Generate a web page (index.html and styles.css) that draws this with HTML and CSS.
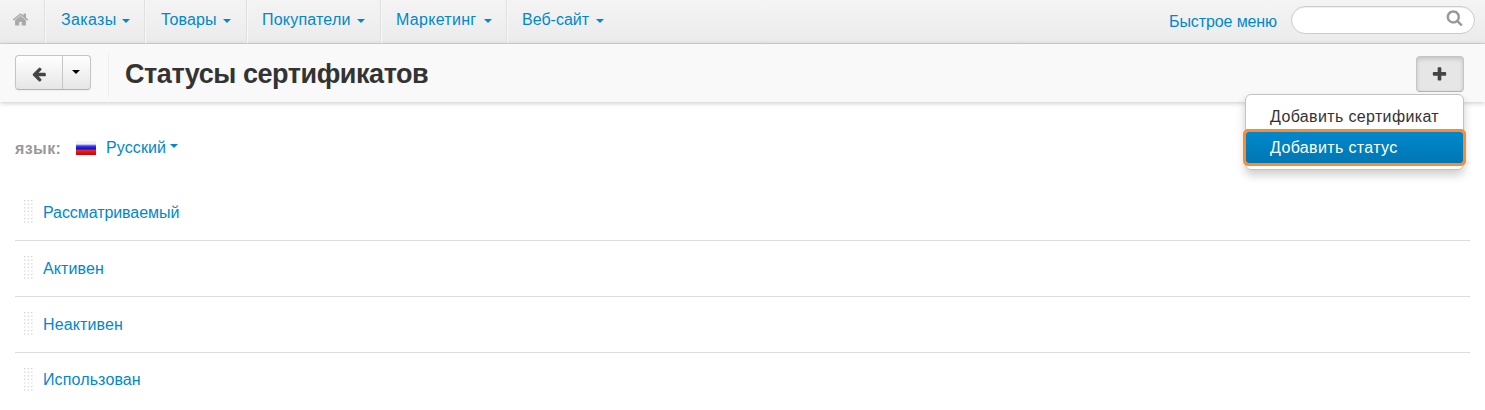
FILE: index.html
```html
<!DOCTYPE html>
<html lang="ru">
<head>
<meta charset="utf-8">
<title>Статусы сертификатов</title>
<link rel="stylesheet" href="styles.css">
</head>
<body>
<nav class="navbar">
  <a class="home"><svg class="icon" viewBox="0 0 1792 1792"><path d="M1472 992v480q0 26-19 45t-45 19h-384v-384h-256v384h-384q-26 0-45-19t-19-45v-480q0-1 .5-3t.5-3l575-474 575 474q1 2 1 6zm223-69l-62 74q-8 9-21 11h-3q-13 0-21-7l-692-577-692 577q-12 8-24 7-13-2-21-11l-62-74q-8-10-7-23.5t11-21.5l719-599q32-26 76-26t76 26l244 204v-195q0-14 9-23t23-9h192q14 0 23 9t9 23v408l219 182q10 8 11 21.5t-7 23.5z"/></svg></a>
  <a class="nav-item orders"><span class="label">Заказы</span><i class="caret"></i></a>
  <a class="nav-item products"><span class="label">Товары</span><i class="caret"></i></a>
  <a class="nav-item customers"><span class="label">Покупатели</span><i class="caret"></i></a>
  <a class="nav-item marketing"><span class="label">Маркетинг</span><i class="caret"></i></a>
  <a class="nav-item website"><span class="label">Веб-сайт</span><i class="caret"></i></a>
  <a class="quick"><span class="quick-label">Быстрое меню</span></a>
  <div class="search"><svg class="icon-search" viewBox="0 0 1792 1792"><path d="M1216 832q0-185-131.500-316.500t-316.500-131.500-316.500 131.500-131.500 316.500 131.500 316.500 316.500 131.500 316.500-131.500 131.500-316.500zm512 832q0 52-38 90t-90 38q-54 0-90-38l-343-342q-179 124-399 124-143 0-273.500-55.500t-225-150-150-225-55.500-273.500 55.500-273.500 150-225 225-150 273.500-55.500 273.500 55.500 225 150 150 225 55.500 273.500q0 220-124 399l343 343q37 37 37 90z"/></svg></div>
</nav>
<header class="actions">
  <div class="btn-group">
    <a class="btn-back"><svg class="icon" viewBox="0 0 1792 1792"><path d="M1664 896v128q0 53-32.500 90.500t-84.500 37.500h-704l293 294q38 36 38 90t-38 90l-75 76q-37 37-90 37-52 0-91-37l-651-652q-37-37-37-90 0-52 37-91l651-650q38-38 91-38 52 0 90 38l75 74q38 38 38 91t-38 91l-293 293h704q52 0 84.500 37.500t32.500 90.500z"/></svg></a>
    <a class="btn-drop"><i class="caret"></i></a>
  </div>
  <h1 class="title"><span class="title-text">Статусы сертификатов</span></h1>
  <div class="add">
    <a class="btn-add"><svg class="icon" viewBox="0 0 1792 1792"><path d="M1600 736v192q0 40-28 68t-68 28h-416v416q0 40-28 68t-68 28h-192q-40 0-68-28t-28-68v-416h-416q-40 0-68-28t-28-68v-192q0-40 28-68t68-28h416v-416q0-40 28-68t68-28h192q40 0 68 28t28 68v416h416q40 0 68 28t28 68z"/></svg></a>
    <div class="menu">
      <a class="menu-item"><span class="menu-cert">Добавить сертификат</span></a>
      <a class="menu-item active"><span class="menu-status">Добавить статус</span></a>
    </div>
  </div>
</header>
<main class="content">
  <div class="language"><span class="lang-label">язык:</span><i class="flag"></i><a class="lang-name">Русский</a><i class="caret"></i></div>
  <div class="row"><svg class="grip" width="9" height="24"><use href="#dots"/></svg><a class="s1">Рассматриваемый</a></div>
  <div class="row"><svg class="grip" width="9" height="24"><use href="#dots"/></svg><a class="s2">Активен</a></div>
  <div class="row"><svg class="grip" width="9" height="24"><use href="#dots"/></svg><a class="s3">Неактивен</a></div>
  <div class="row last"><svg class="grip" width="9" height="24"><use href="#dots"/></svg><a class="s4">Использован</a></div>
</main>
<svg class="defs" width="0" height="0"><defs><g id="dots" stroke="#d2d2d2" stroke-width="1.3" stroke-dasharray="1.200 2.400"><path d="M.7 0v24M4.500 0v24M7.800 0v24"/></g></defs></svg>
</body>
</html>
```
FILE: styles.css
```css
* { box-sizing: border-box; }
body { margin: 0; width: 1485px; height: 410px; overflow: hidden; background: #fff; color: #333; font: 16px/20px "Liberation Sans", Arial, sans-serif; }
a { color: #08c; text-decoration: none; white-space: nowrap; }
svg { display: block; }
.defs { display: none; }
.icon { width: 16px; height: 16px; fill: #444; }
.caret { width: 0; height: 0; border: 4px solid transparent; border-top-color: #08c; border-bottom: 0; flex: none; }

.navbar { display: flex; height: 44px; border-bottom: 1px solid #d6d6d6; background: linear-gradient(#f4f4f4, #ebebeb); }
.home { width: 45px; padding: 11px 0 0 12px; border-right: 1px solid #dfdfdf; }
.home .icon { width: 17px; height: 17px; fill: #aaa; }
.nav-item { display: flex; justify-content: space-between; padding: 10px 15px 0 16px; border-right: 1px solid #dfdfdf; box-shadow: inset 1px 0 #f8f8f8; }
.nav-item .caret { margin-top: 9px; }
.orders { width: 100px; padding-right: 14px; letter-spacing: .35px; }
.products { width: 102px; letter-spacing: .1px; }
.customers { width: 134px; padding-left: 15px; letter-spacing: .2px; }
.marketing { width: 126px; padding-left: 15px; padding-right: 14px; letter-spacing: .3px; }
.website { width: 113px; padding-left: 15px; padding-right: 16px; border-right: 0; }
.quick { margin-left: auto; padding-top: 12px; width: 122px; letter-spacing: -.1px; }
.search { width: 184px; height: 28px; margin: 6px 10px 0 0; padding: 2px 0 0 154px; border: 1px solid #ccc; border-radius: 14px; background: #fff; box-shadow: inset 0 1px 1px rgba(0,0,0,.07); }
.icon-search { width: 17px; height: 17px; fill: #999; }

.actions { display: flex; height: 58px; padding-left: 15px; background: #f9f9f9; box-shadow: 0 1px 5px rgba(0,0,0,.22); }
.btn-group { display: flex; width: 76px; height: 35px; margin-top: 11px; border: 1px solid #c5c5c5; border-bottom-color: #b3b3b3; border-radius: 4px; background: linear-gradient(#fff, #e6e6e6); box-shadow: 0 1px 2px rgba(0,0,0,.05); }
.btn-back { width: 47px; padding: 10px 0 0 15px; border-right: 1px solid #c5c5c5; }
.btn-drop { padding: 14px 0 0 9px; }
.btn-drop .caret { display: block; border-top-color: #000; }
.title { margin: 9px 0 0 17px; padding: 6px 0 0 16px; height: 44px; border-left: 1px solid #eee; font-size: 27px; line-height: 30px; font-weight: bold; letter-spacing: -.45px; white-space: nowrap; }
.add { position: relative; width: 48px; height: 36px; margin: 12px 21px 0 auto; }
.btn-add { display: block; width: 48px; height: 36px; padding: 9px 0 0 14px; border: 1px solid #c5c5c5; border-bottom-color: #b3b3b3; border-radius: 4px; background: #e6e6e6; box-shadow: inset 0 2px 4px rgba(0,0,0,.15); }
.btn-add .icon { width: 17px; height: 17px; }
.menu { position: absolute; top: 38px; right: 0; width: 219px; height: 76px; padding: 6px 0; border: 1px solid #c3c3c3; border-radius: 6px; background: #fff; box-shadow: 0 5px 10px rgba(0,0,0,.2); }
.menu-item { display: block; height: 31px; padding: 6px 0 0 24px; color: #333; letter-spacing: .36px; }
.menu-item.active { color: #fff; background: linear-gradient(#08c, #0077b3); border-radius: 2px; outline: 3px solid #ff8a27; }

.content { padding: 0 15px; }
.language { display: flex; height: 82px; padding-top: 35px; }
.lang-label { width: 61px; padding-top: 2px; color: #999; font-weight: bold; letter-spacing: .4px; }
.lang-name { padding-top: 1px; letter-spacing: .1px; }
.flag { width: 20px; height: 14px; margin: 4px 10px 0 0; background: linear-gradient(#f4f4f4 0 3px, #3a3af0 5px, #0a0ac8 8px, #f02828 9px, #c80a0a 13px); }
.language .caret { margin: 7px 0 0 4px; }
.row { display: flex; height: 56px; padding: 18px 0 0 9px; border-bottom: 1px solid #ddd; }
.row:nth-child(2) { height: 57px; padding-top: 19px; }
.last { border-bottom: 0; }
.last .s4 { margin-top: -1px; }
.grip { margin: -3px 10px 0 0; }
.s1 { letter-spacing: -.07px; }
.s2, .s3, .s4 { letter-spacing: .12px; }
```
